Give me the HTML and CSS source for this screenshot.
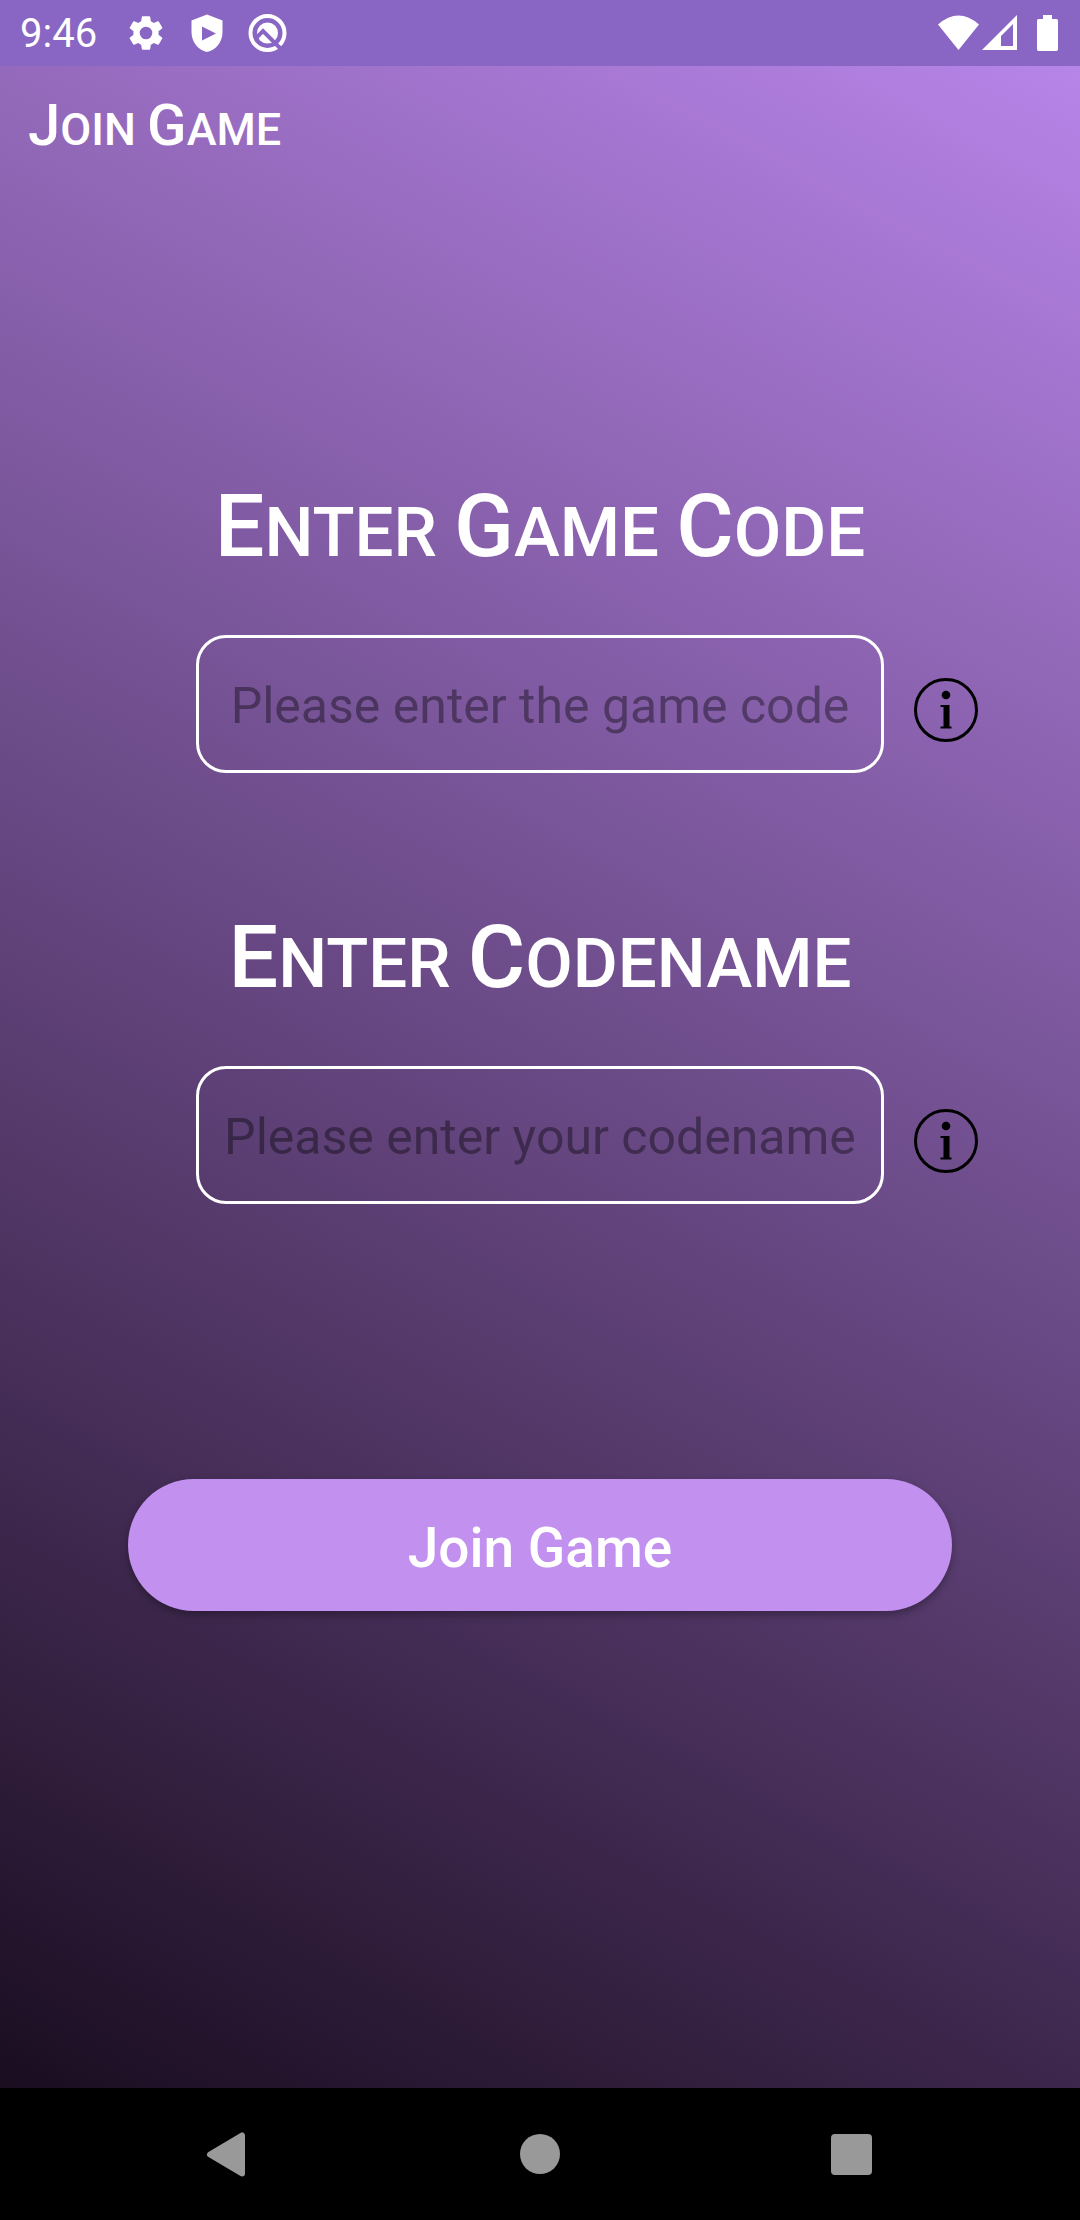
FILE: index.html
```
<!DOCTYPE html>
<html lang="en">
<head>
<meta charset="utf-8">
<meta name="viewport" content="width=device-width, initial-scale=1">
<title>Join Game</title>
<link rel="stylesheet" href="styles.css">
</head>
<body>
<header class="status-bar">
  <span class="clock">9:46</span>
  <div class="notifications">
    <svg class="status-icon" viewBox="0 0 24 24" aria-hidden="true"><path fill="#fff" d="M19.14 12.94c.04-.3.06-.61.06-.94s-.02-.64-.07-.94l2.03-1.58a.49.49 0 0 0 .12-.61l-1.92-3.32a.49.49 0 0 0-.59-.22l-2.39.96a7 7 0 0 0-1.62-.94L14.400 2.810a.48.48 0 0 0-.48-.41h-3.840a.47.47 0 0 0-.47.41l-.36 2.540a7.200 7.200 0 0 0-1.620.94l-2.390-.96a.48.48 0 0 0-.59.22L2.740 8.870a.47.47 0 0 0 .12.61l2.030 1.580c-.05.3-.09.63-.09.94s.02.64.07.94l-2.030 1.580a.49.49 0 0 0-.12.61l1.920 3.320c.12.22.37.29.59.22l2.390-.96c.5.38 1.030.7 1.620.94l.36 2.540c.05.24.24.41.48.41h3.840c.24 0 .44-.17.47-.41l.36-2.540a6.800 6.800 0 0 0 1.620-.94l2.390.96c.22.08.47 0 .59-.22l1.920-3.320a.47.47 0 0 0-.12-.61zM12 15.600a3.600 3.600 0 1 1 0-7.200 3.600 3.600 0 0 1 0 7.200z"/></svg>
    <svg class="status-icon" viewBox="0 0 42 42" aria-hidden="true"><path fill="#fff" fill-rule="evenodd" d="M21 2.500 36.500 8.500V20C36.500 30 30 38 21 40 12 38 5.500 30 5.500 20V8.500ZM16 14.500V28.500L30 21.500Z"/></svg>
    <svg class="status-icon" viewBox="0 0 42 42" aria-hidden="true"><circle cx="20.500" cy="21" r="17" fill="none" stroke="#fff" stroke-width="4"/><circle cx="20.500" cy="21" r="10.500" fill="#fff"/><path fill="none" stroke="#8966c3" stroke-width="4" d="M8 27 16 19 36 39"/></svg>
  </div>
  <svg class="system-icons" viewBox="0 0 122 42" aria-hidden="true"><path fill="#fff" d="M0 12.500Q20.500-5.500 41 12.500L20.500 38ZM44 38 79 3V38ZM63 24V34H75V12ZM99 8.500Q99 7 100.500 7H105V3H114V7H118.500Q120 7 120 8.500V37Q120 39 118.500 39H100.500Q99 39 99 37Z" fill-rule="evenodd"/></svg>
</header>
<main class="screen">
  <h1 class="screen-title small-caps"><span class="word">Join</span> <span class="word">Game</span></h1>
  <form class="join-form">
    <section class="field">
      <label class="field-label small-caps" for="game-code"><span class="word">Enter</span> <span class="word">Game</span> <span class="word">Code</span></label>
      <input class="field-input" id="game-code" type="text" placeholder="Please enter the game code">
      <button class="info" type="button" aria-label="About the game code"><svg class="info-icon" viewBox="0 0 64 64" aria-hidden="true"><circle cx="32" cy="32" r="30.500" fill="none" stroke="#000" stroke-width="3"/><circle cx="32" cy="17" r="4.300"/><path d="M26.500 27H35.500V48.500H37.500V50.500H26.500V48.500H29.500V29H26.500Z"/></svg></button>
    </section>
    <section class="field">
      <label class="field-label small-caps" for="codename"><span class="word">Enter</span> <span class="word">Codename</span></label>
      <input class="field-input" id="codename" type="text" placeholder="Please enter your codename">
      <button class="info" type="button" aria-label="About the codename"><svg class="info-icon" viewBox="0 0 64 64" aria-hidden="true"><circle cx="32" cy="32" r="30.500" fill="none" stroke="#000" stroke-width="3"/><circle cx="32" cy="17" r="4.300"/><path d="M26.500 27H35.500V48.500H37.500V50.500H26.500V48.500H29.500V29H26.500Z"/></svg></button>
    </section>
    <button class="join-button" type="submit">Join Game</button>
  </form>
</main>
<nav class="nav-bar" aria-label="System">
  <button class="nav-button" type="button" aria-label="Back"><svg class="nav-icon" viewBox="0 0 48 48" aria-hidden="true"><path fill="#999" stroke="#999" stroke-width="6" stroke-linejoin="round" d="M6 24.500 38 5.500V43.500Z"/></svg></button>
  <button class="nav-button" type="button" aria-label="Home"><svg class="nav-icon" viewBox="0 0 48 48" aria-hidden="true"><circle cx="24" cy="24" r="20" fill="#999"/></svg></button>
  <button class="nav-button" type="button" aria-label="Recent apps"><svg class="nav-icon" viewBox="0 0 48 48" aria-hidden="true"><rect x="3" y="4" width="41" height="41" rx="4" fill="#999"/></svg></button>
</nav>
</body>
</html>
```
FILE: styles.css
```
* {
  box-sizing: border-box;
}

body {
  margin: 0;
  min-height: 100vh;
  display: flex;
  flex-direction: column;
  background: #000;
  color: #fff;
  font-family: Roboto, sans-serif;
}

button {
  margin: 0;
  padding: 0;
  border: 0;
  background: none;
  color: inherit;
  font: inherit;
}

svg {
  display: block;
}

.status-bar {
  height: 66px;
  padding: 0 20px;
  display: flex;
  align-items: center;
  background: #8966c3;
}

.clock {
  padding-top: 2px;
  font-size: 40px;
  line-height: 64px;
}

.notifications {
  margin-left: 28px;
  display: flex;
  gap: 19px;
}

.status-icon {
  width: 42px;
  height: 42px;
}

.system-icons {
  width: 122px;
  height: 42px;
  margin-left: auto;
}

.screen {
  flex: 1;
  background: linear-gradient(28deg, #1a0d20, #b784e8);
}

/* Large initial followed by smaller capitals, word by word */
.small-caps {
  font-weight: 500;
  text-align: center;
}

.word {
  display: inline-block;
  text-transform: uppercase;
}

.screen-title {
  margin: 0;
  padding: 0 28px;
  font-size: 45px;
  line-height: 118px;
  text-align: left;
}

.screen-title .word::first-letter {
  font-size: 58px;
}

.join-form {
  padding-top: 277px;
}

.field {
  display: grid;
  grid-template-columns: 196fr 688fr 196fr;
  row-gap: 42px;
  margin-bottom: 275px;
}

.field:first-child {
  margin-bottom: 124px;
}

.field-label {
  grid-column: 1 / -1;
  font-size: 69px;
  line-height: 120px;
}

.field-label .word::first-letter {
  font-size: 88px;
}

.field-input {
  grid-column: 2;
  width: 100%;
  min-width: 0;
  height: 138px;
  padding: 4px 16px 0;
  border: 3px solid #fff;
  border-radius: 30px;
  background: none;
  color: #fff;
  font: 400 50px Roboto, sans-serif;
  text-align: center;
}

.field-input::placeholder {
  color: rgba(0, 0, 0, 0.38);
  opacity: 1;
}

.info {
  justify-self: start;
  align-self: center;
  margin: 12px 0 0 30px;
}

.info-icon {
  width: 64px;
  height: 64px;
}

.join-button {
  display: block;
  width: calc(100% - 256px);
  height: 132px;
  margin: 0 auto;
  padding-top: 6px;
  border-radius: 66px;
  background: #c290ee;
  box-shadow: 0 4px 8px rgba(0, 0, 0, 0.3);
  font-size: 55px;
  font-weight: 500;
}

.nav-bar {
  height: 132px;
  padding: 0 72px;
  display: grid;
  grid-template-columns: repeat(3, 1fr);
  align-items: center;
  justify-items: center;
}

.nav-icon {
  width: 48px;
  height: 48px;
}
```
